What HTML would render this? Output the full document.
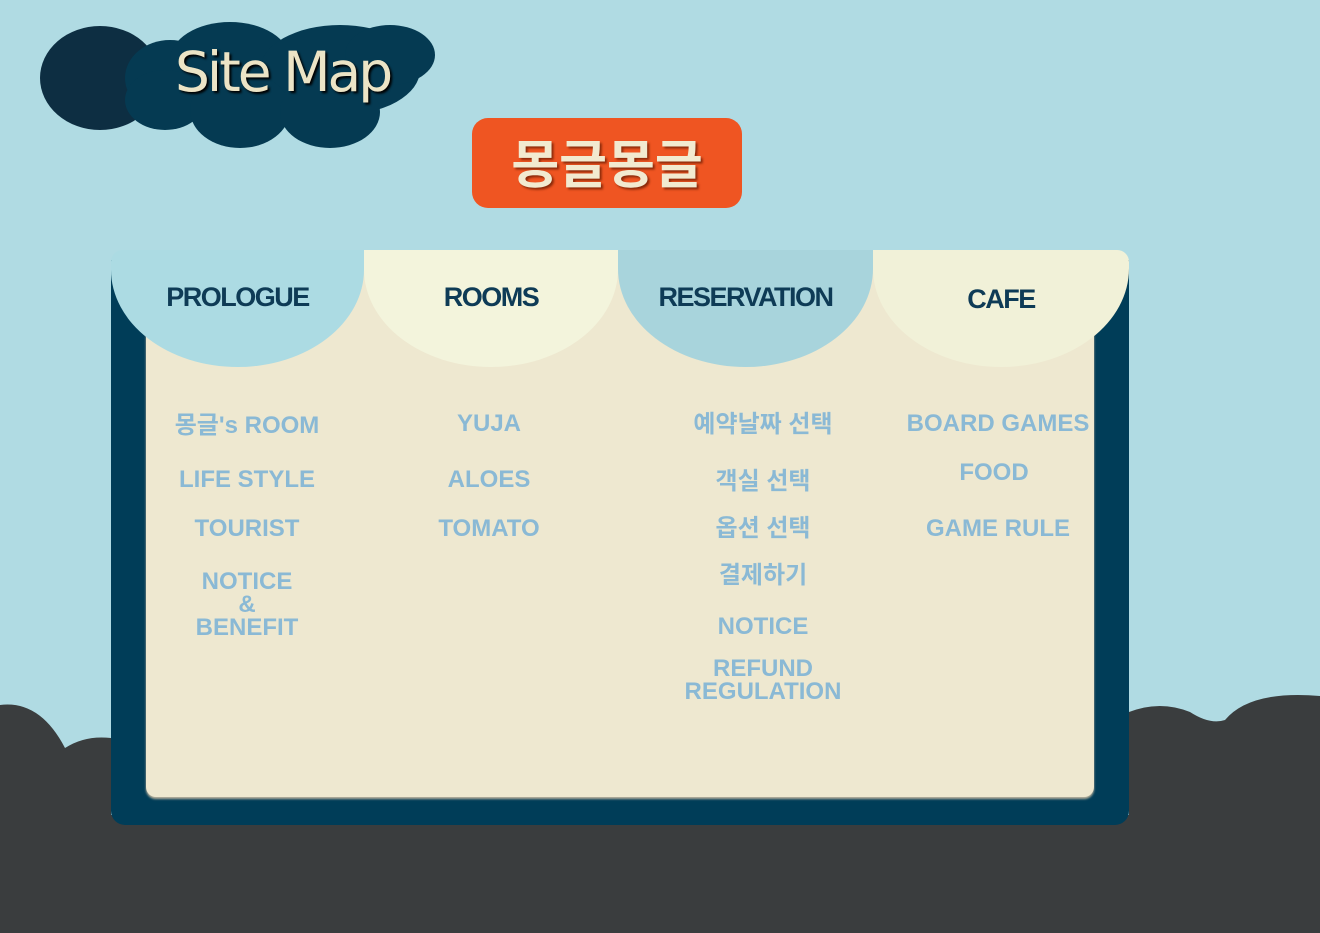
<!DOCTYPE html>
<html><head><meta charset="utf-8"><style>
*{margin:0;padding:0;box-sizing:border-box}
body{width:1320px;height:933px;overflow:hidden;background:#b0dbe3;position:relative;font-family:"Liberation Sans","Noto Sans CJK KR",sans-serif}
.abs{position:absolute}
.tab{position:absolute;top:250px;height:117px;border-radius:0 0 130px 130px / 0 0 100px 100px;display:flex;justify-content:center;padding-top:32px;font-size:27px;font-weight:bold;color:#0e3b56;letter-spacing:-1.5px}
.it{position:absolute;color:#8ab9d5;font-weight:bold;font-size:24px;text-align:center;transform:translateX(-50%);white-space:nowrap;line-height:23px;letter-spacing:0}
</style></head><body>
<svg class="abs" style="left:0;top:0" width="1320" height="933">
<path d="M0 705 Q40 700 65 748 Q85 735 111 738 L111 933 L0 933Z" fill="#3a3d3e"/>
<path d="M1129 712 Q1160 700 1190 712 Q1210 725 1225 720 Q1250 690 1320 696 L1320 933 L1129 933Z" fill="#3a3d3e"/>
<rect x="0" y="815" width="1320" height="118" fill="#3a3d3e"/>
<ellipse cx="100" cy="78" rx="60" ry="52" fill="#0d2e42"/>
<g fill="#053a52"><ellipse cx="170" cy="78" rx="45" ry="38"/><ellipse cx="230" cy="60" rx="60" ry="38"/><ellipse cx="340" cy="70" rx="80" ry="45"/><ellipse cx="390" cy="55" rx="45" ry="30"/><ellipse cx="165" cy="100" rx="40" ry="30"/><ellipse cx="240" cy="110" rx="50" ry="38"/><ellipse cx="330" cy="112" rx="50" ry="36"/></g>
</svg>
<div class="abs" style="left:175px;top:40px;font-size:55px;color:#ece4c6;font-family:'DejaVu Sans',sans-serif;letter-spacing:-3px;text-shadow:2px 2px 2px #000">Site Map</div>
<div class="abs" style="left:472px;top:118px;width:270px;height:90px;background:#ef5522;border-radius:16px;color:#f2ead0;font-size:52px;font-weight:bold;text-align:center;line-height:86px;font-family:'Noto Sans CJK KR',sans-serif;text-shadow:2px 2px 2px #8a2a0a">몽글몽글</div>
<div class="abs" style="left:111px;top:260px;width:1018px;height:565px;background:#003d58;border-radius:0 0 14px 14px"></div>
<div class="abs" style="left:146px;top:255px;width:948px;height:542px;background:#eee8d0;border-radius:0 0 10px 10px;box-shadow:0 2px 2px #b8b19c"></div>
<div class="tab" style="left:111px;width:253px;background:#acdbe3;border-top-left-radius:12px">PROLOGUE</div>
<div class="tab" style="left:364px;width:254px;background:#f3f4dc">ROOMS</div>
<div class="tab" style="left:618px;width:255px;background:#a8d4dc">RESERVATION</div>
<div class="tab" style="left:873px;width:256px;background:#f1f1d8;border-top-right-radius:12px;padding-top:34px">CAFE</div>
<div class="it" style="left:247px;top:414px">몽글's ROOM</div>
<div class="it" style="left:247px;top:468px">LIFE STYLE</div>
<div class="it" style="left:247px;top:517px">TOURIST</div>
<div class="it" style="left:247px;top:570px">NOTICE<br>&amp;<br>BENEFIT</div>
<div class="it" style="left:489px;top:412px">YUJA</div>
<div class="it" style="left:489px;top:468px">ALOES</div>
<div class="it" style="left:489px;top:517px">TOMATO</div>
<div class="it" style="left:763px;top:413px">예약날짜 선택</div>
<div class="it" style="left:763px;top:470px">객실 선택</div>
<div class="it" style="left:763px;top:517px">옵션 선택</div>
<div class="it" style="left:763px;top:564px">결제하기</div>
<div class="it" style="left:763px;top:615px">NOTICE</div>
<div class="it" style="left:763px;top:657px">REFUND<br>REGULATION</div>
<div class="it" style="left:998px;top:412px">BOARD GAMES</div>
<div class="it" style="left:994px;top:461px">FOOD</div>
<div class="it" style="left:998px;top:517px">GAME RULE</div>
</body></html>
